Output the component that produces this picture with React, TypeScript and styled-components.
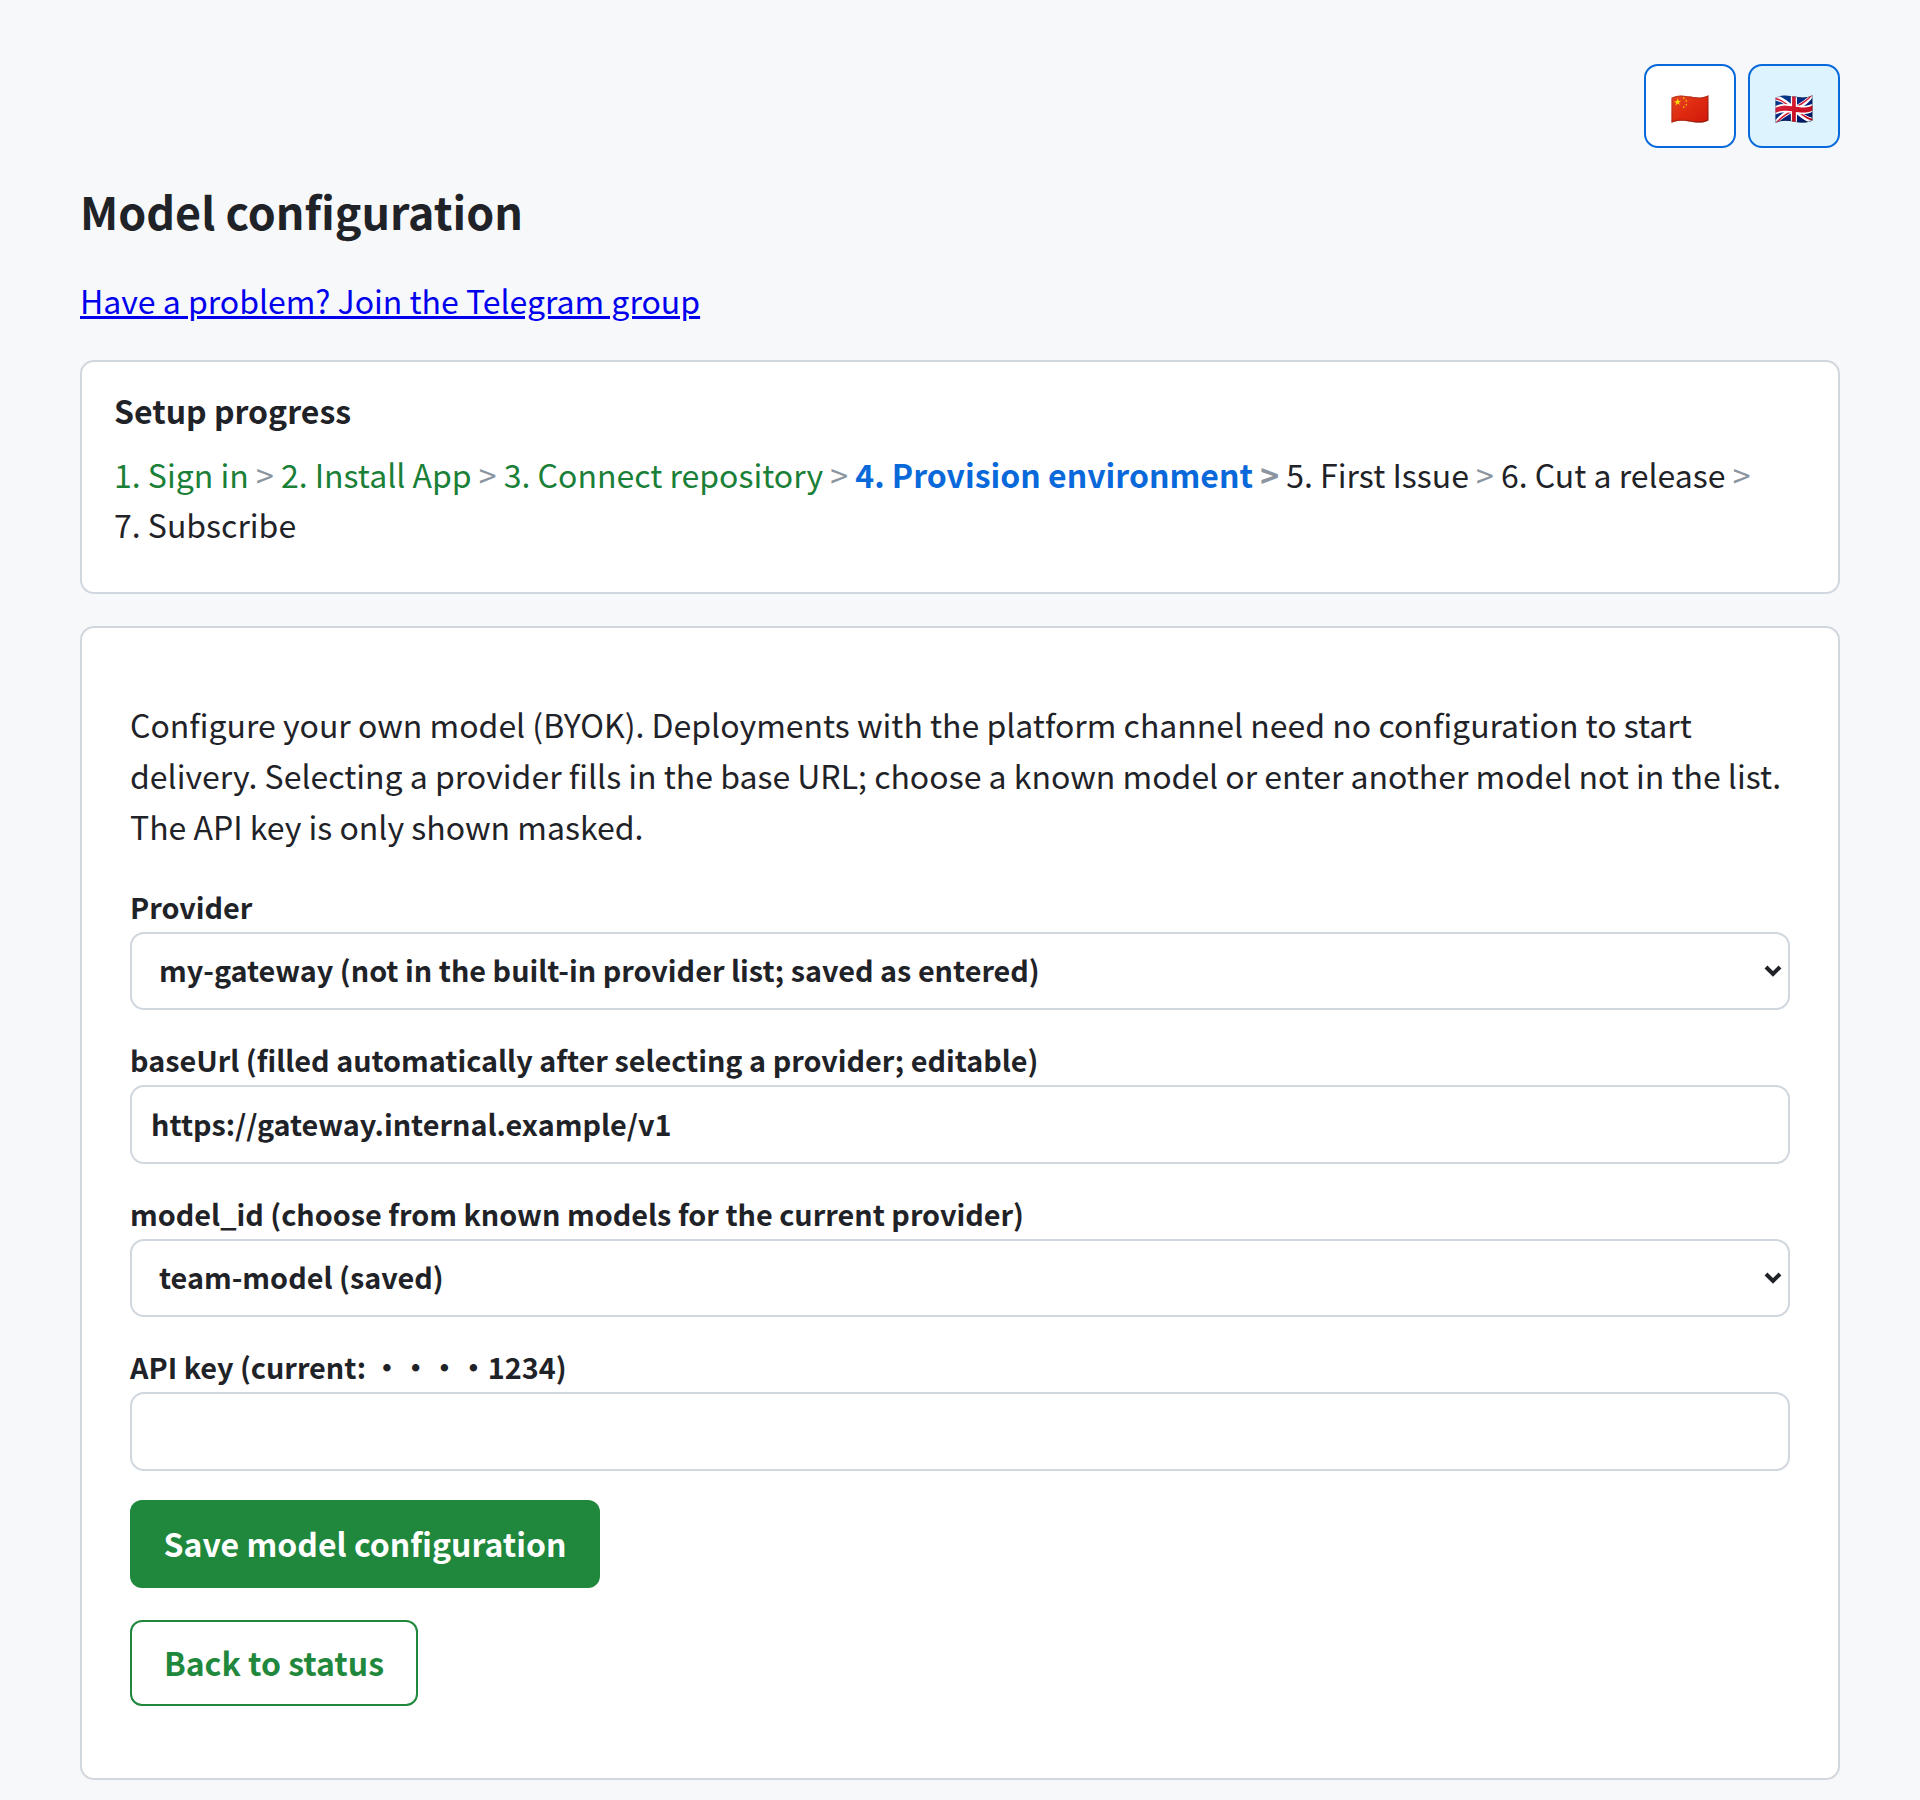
import styled, { createGlobalStyle } from 'styled-components';

const GlobalStyle = createGlobalStyle`
  html, body {
    margin: 0;
    padding: 0;
    background: #f6f8fa;
  }
  body {
    font-family: "Noto Sans CJK SC", "Noto Sans", sans-serif;
    color: #1f2328;
  }
  * {
    box-sizing: border-box;
  }
`;

const steps = [
  { label: '1. Sign in', state: 'done' },
  { label: '2. Install App', state: 'done' },
  { label: '3. Connect repository', state: 'done' },
  { label: '4. Provision environment', state: 'current' },
  { label: '5. First Issue', state: 'todo' },
  { label: '6. Cut a release', state: 'todo' },
  { label: '7. Subscribe', state: 'todo' },
] as const;

const App = () => (
  <Page>
    <GlobalStyle />
    <LangBar>
      <LangButton type="button" aria-label="中文">🇨🇳</LangButton>
      <LangButton type="button" aria-label="English" $active>🇬🇧</LangButton>
    </LangBar>
    <Title>Model configuration</Title>
    <HelpLink href="#">Have a problem? Join the Telegram group</HelpLink>
    <ProgressCard>
      <ProgressTitle>Setup progress</ProgressTitle>
      <StepLine>
        {steps.map((step, index) => (
          <span key={step.label}>
            <Step $state={step.state}>{step.label}</Step>
            {index < steps.length - 1 && <Arrow $bold={step.state === 'current'}> &gt; </Arrow>}
          </span>
        ))}
      </StepLine>
    </ProgressCard>
    <FormCard>
      <Intro>
        Configure your own model (BYOK). Deployments with the platform channel need no configuration to start delivery.
        Selecting a provider fills in the base URL; choose a known model or enter another model not in the list. The API
        key is only shown masked.
      </Intro>
      <Field>
        <Label htmlFor="provider">Provider</Label>
        <SelectWrap>
          <Select id="provider" defaultValue="my-gateway">
            <option value="my-gateway">my-gateway (not in the built-in provider list; saved as entered)</option>
          </Select>
          <SelectArrow viewBox="0 0 20 14" aria-hidden="true">
            <path d="M3 3L10 10L17 3" fill="none" stroke="#1f2328" strokeWidth="4" />
          </SelectArrow>
        </SelectWrap>
      </Field>
      <Field>
        <Label htmlFor="baseUrl">baseUrl (filled automatically after selecting a provider; editable)</Label>
        <Input id="baseUrl" defaultValue="https://gateway.internal.example/v1" />
      </Field>
      <Field>
        <Label htmlFor="model">model_id (choose from known models for the current provider)</Label>
        <SelectWrap>
          <Select id="model" defaultValue="team-model">
            <option value="team-model">team-model (saved)</option>
          </Select>
          <SelectArrow viewBox="0 0 20 14" aria-hidden="true">
            <path d="M3 3L10 10L17 3" fill="none" stroke="#1f2328" strokeWidth="4" />
          </SelectArrow>
        </SelectWrap>
      </Field>
      <Field>
        <Label htmlFor="apiKey">API key (current: ••••1234)</Label>
        <Input id="apiKey" type="password" />
      </Field>
      <SaveButton type="button">Save model configuration</SaveButton>
      <BackButton type="button">Back to status</BackButton>
    </FormCard>
  </Page>
);

const Page = styled.main`
  display: flex;
  flex-direction: column;
  align-items: stretch;
  padding: 64px 80px 20px;
`;

const LangBar = styled.div`
  display: flex;
  justify-content: flex-end;
  gap: 12px;
`;

const LangButton = styled.button<{ $active?: boolean }>`
  display: flex;
  align-items: center;
  justify-content: center;
  width: 92px;
  height: 84px;
  padding: 0;
  border: 2px solid #0969da;
  border-radius: 14px;
  background: ${({ $active }) => ($active ? '#ddf4ff' : '#fff')};
  font-size: 32px;
  font-family: "Noto Sans CJK SC", "Noto Sans", sans-serif;
`;

const Title = styled.h1`
  margin: 33px 0 0;
  font-size: 44.8px;
  line-height: 60px;
  font-weight: 700;
`;

const HelpLink = styled.a`
  align-self: flex-start;
  margin-top: 34px;
  font-size: 32px;
  line-height: 51px;
  color: #0000ee;
`;

const ProgressCard = styled.section`
  margin-top: 34px;
  padding: 26px 32px 43px;
  border: 2px solid #d0d7de;
  border-radius: 14px;
  background: #fff;
`;

const ProgressTitle = styled.h2`
  margin: 0;
  font-size: 32px;
  line-height: 44px;
  font-weight: 700;
`;

const StepLine = styled.div`
  margin-top: 17px;
  font-size: 32px;
  line-height: 50px;
`;

const Step = styled.span<{ $state: 'done' | 'current' | 'todo' }>`
  white-space: nowrap;
  color: ${({ $state }) =>
    $state === 'done' ? '#1a7f37' : $state === 'current' ? '#0969da' : '#1f2328'};
  font-weight: ${({ $state }) => ($state === 'current' ? 700 : 400)};
`;

const Arrow = styled.span<{ $bold: boolean }>`
  color: #8c959f;
  font-weight: ${({ $bold }) => ($bold ? 700 : 400)};
`;

const FormCard = styled.section`
  display: flex;
  flex-direction: column;
  align-items: flex-start;
  margin-top: 32px;
  padding: 71px 48px 72px;
  border: 2px solid #d0d7de;
  border-radius: 14px;
  background: #fff;
`;

const Intro = styled.p`
  margin: 0 0 33px;
  font-size: 32px;
  line-height: 51px;
`;

const Field = styled.div`
  display: flex;
  flex-direction: column;
  width: 100%;
  margin-bottom: 28px;
`;

const Label = styled.label`
  padding-bottom: 3px;
  font-size: 28.8px;
  line-height: 44px;
  font-weight: 700;
`;

const SelectWrap = styled.div`
  position: relative;
  display: flex;
`;

const Select = styled.select`
  width: 100%;
  height: 78px;
  padding: 0 60px 3px 27px;
  border: 2px solid #d0d7de;
  border-radius: 14px;
  background: #fff;
  appearance: none;
  font: 700 28.8px "Noto Sans CJK SC", "Noto Sans", sans-serif;
  color: #1f2328;
`;

const SelectArrow = styled.svg`
  position: absolute;
  top: 32px;
  right: 7px;
  width: 20px;
  height: 14px;
`;

const Input = styled.input`
  width: 100%;
  height: 79px;
  padding: 0 19px 3px;
  border: 2px solid #d0d7de;
  border-radius: 14px;
  background: #fff;
  font: 700 28.8px "Noto Sans CJK SC", "Noto Sans", sans-serif;
  color: #1f2328;
`;

const SaveButton = styled.button`
  height: 88px;
  width: 470px;
  margin-top: 1px;
  padding: 0 0 3px;
  border: 0;
  border-radius: 12px;
  background: #1f883d;
  font: 700 32px "Noto Sans CJK SC", "Noto Sans", sans-serif;
  color: #fff;
`;

const BackButton = styled.button`
  height: 86px;
  width: 288px;
  margin-top: 32px;
  padding: 0 0 3px;
  border: 2px solid #1f883d;
  border-radius: 12px;
  background: #fff;
  font: 700 32px "Noto Sans CJK SC", "Noto Sans", sans-serif;
  color: #1f883d;
`;

export default App;
